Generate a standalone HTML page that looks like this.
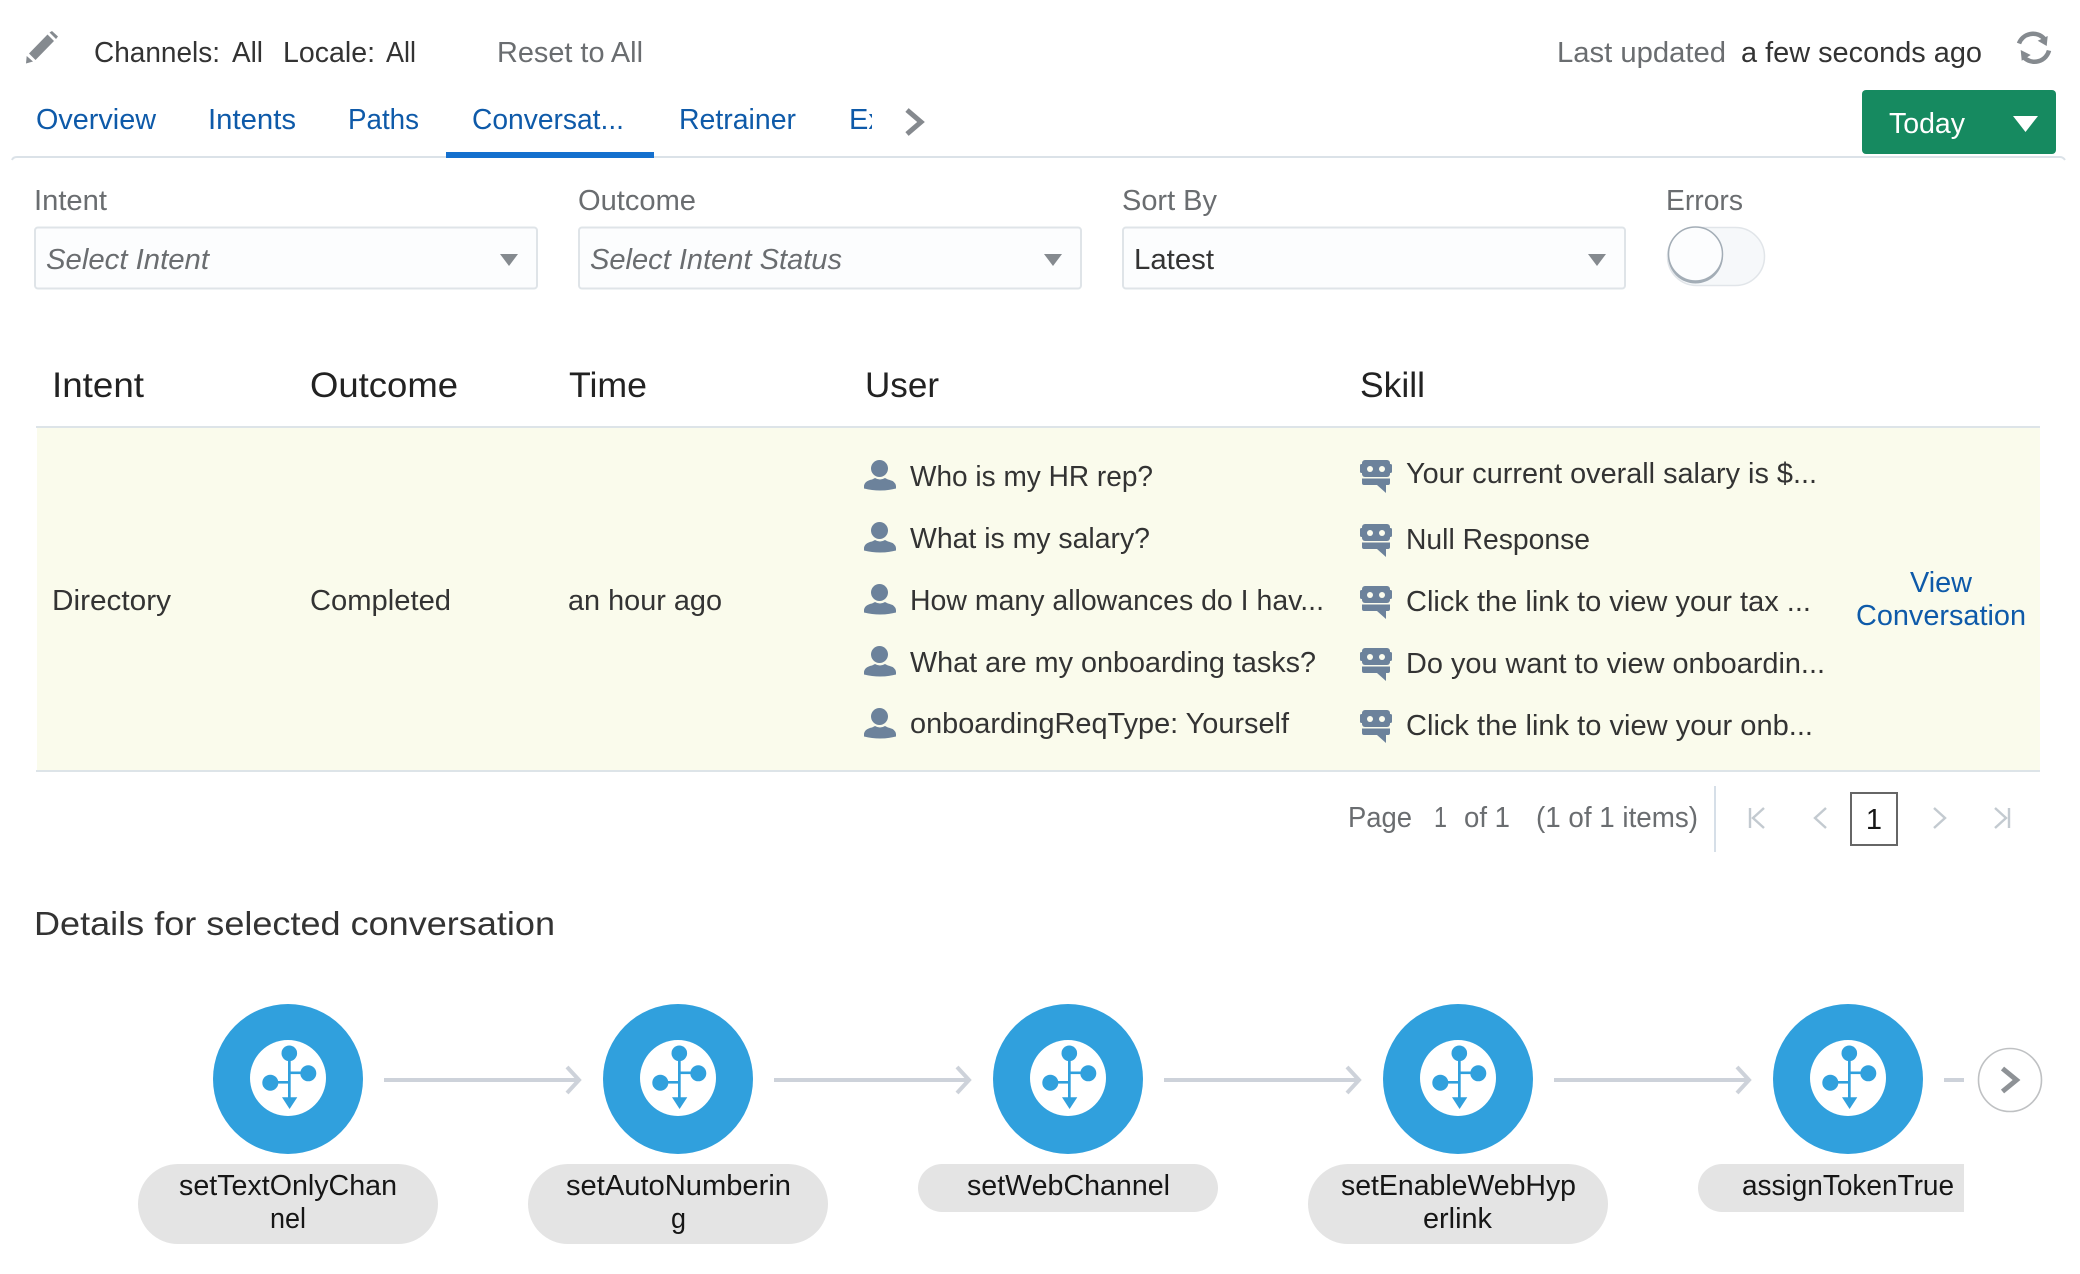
<!DOCTYPE html>
<html lang="en"><head><meta charset="utf-8"><title>Conversations</title>
<style>
html,body{margin:0;padding:0;background:#fff;width:2080px;height:1274px;overflow:hidden}
svg{display:block}
text{font-family:"Liberation Sans",sans-serif;font-size:29px;fill:#333}
.g{fill:#6a6d70}.b{fill:#0e5aa9}.d{fill:#333}.k{fill:#161616}
.h{font-size:35px;fill:#222}
</style></head><body>
<svg width="2080" height="1274" viewBox="0 0 2080 1274" xmlns="http://www.w3.org/2000/svg">
<defs>
<clipPath id="ex"><rect x="840" y="100" width="32" height="50"/></clipPath>
<g id="user" fill="#6c829b"><circle cx="15.5" cy="8.5" r="8.5"/><path d="M0 26Q.5 21 8 19.5L11 18Q16 21 21 18L24 19.5Q31.5 21 32 26V28.5Q16 32.5 0 28.5Z"/></g>
<g id="bot"><g fill="#6c829b"><rect x="2" y="0" width="28" height="17" rx="3"/><rect x="0" y="4" width="32" height="9" rx="1.5"/><path d="M2 18.5H30V23Q30 25 28 25H26V33L17 25H4Q2 25 2 23Z"/></g><circle cx="10" cy="9" r="3" fill="#fbfcee"/><circle cx="22" cy="9" r="3" fill="#fbfcee"/></g>
<g id="node"><circle cx="0" cy="0" r="75" fill="#30a0dd"/><circle cx="0" cy="-1" r="38" fill="#fff"/>
<g fill="#30a0dd"><circle cx="1.3" cy="-25.7" r="7.8"/><circle cx="20.3" cy="-5.7" r="8"/><circle cx="-17.7" cy="3.7" r="8"/><rect x="0" y="-26" width="2.7" height="46"/><rect x="1" y="-7.5" width="19" height="2.6"/><rect x="-17" y="2" width="18" height="2.6"/><path d="M-6 18.3H9.3L1.6 30Z"/></g></g>
<g id="arrow" fill="none" stroke="#cdd2da"><path d="M0 0H194" stroke-width="4"/><path d="M183 -13L195 0L183 13" stroke-width="4"/></g>
</defs>

<!-- top bar -->
<g fill="#858a8f"><path d="M26 63.5L26.7 56L33 61.5Z"/><path d="M29 53.5L35.5 60L54 41L47.5 34.5Z"/><path d="M49.5 32.5L56 39L58 36.5L52 31Z"/></g>
<text x="94" y="62" textLength="126" lengthAdjust="spacingAndGlyphs">Channels:</text>
<text x="232" y="62" textLength="31" lengthAdjust="spacingAndGlyphs">All</text>
<text x="283" y="62" textLength="92" lengthAdjust="spacingAndGlyphs">Locale:</text>
<text x="386" y="62" textLength="30" lengthAdjust="spacingAndGlyphs">All</text>
<text class="g" x="497" y="62" textLength="146" lengthAdjust="spacingAndGlyphs">Reset to All</text>
<text class="g" x="1557" y="62" textLength="169" lengthAdjust="spacingAndGlyphs">Last updated</text>
<text x="1741" y="62" textLength="241" lengthAdjust="spacingAndGlyphs">a few seconds ago</text>
<g fill="none" stroke="#858a8f" stroke-width="4.5"><path d="M2019 43.5A15 15 0 0 1 2044 38.5"/><path d="M2049 50.5A15 15 0 0 1 2024 57.5"/></g>
<g fill="#858a8f"><path d="M2047.7 36L2046.7 46L2037.7 40.7Z"/><path d="M2020.7 50L2021.7 60.7L2030.7 55Z"/></g>

<!-- tabs -->
<path d="M12 160Q13 157 17 157H2060Q2063 157 2065 160" fill="none" stroke="#dbe2e8" stroke-width="2"/>
<rect x="446" y="152" width="208" height="6" fill="#1470ce"/>
<text class="b" x="36" y="129" textLength="120" lengthAdjust="spacingAndGlyphs">Overview</text>
<text class="b" x="208" y="129" textLength="88" lengthAdjust="spacingAndGlyphs">Intents</text>
<text class="b" x="348" y="129" textLength="71" lengthAdjust="spacingAndGlyphs">Paths</text>
<text class="b" x="472" y="129" textLength="152" lengthAdjust="spacingAndGlyphs">Conversat...</text>
<text class="b" x="679" y="129" textLength="117" lengthAdjust="spacingAndGlyphs">Retrainer</text>
<text class="b" x="849" y="129" clip-path="url(#ex)">Explore</text>
<path d="M907 110L921 122L907 134" fill="none" stroke="#85898e" stroke-width="5"/>
<rect x="1862" y="90" width="194" height="64" rx="4" fill="#168a60"/>
<text x="1889" y="133" textLength="76" lengthAdjust="spacingAndGlyphs" style="fill:#fff">Today</text>
<path d="M2013 116H2038L2025.5 132Z" fill="#fff"/>

<!-- filters -->
<text class="g" x="34" y="210" textLength="73" lengthAdjust="spacingAndGlyphs">Intent</text>
<text class="g" x="578" y="210" textLength="118" lengthAdjust="spacingAndGlyphs">Outcome</text>
<text class="g" x="1122" y="210" textLength="95" lengthAdjust="spacingAndGlyphs">Sort By</text>
<text class="g" x="1666" y="210" textLength="77" lengthAdjust="spacingAndGlyphs">Errors</text>
<g fill="#fcfdfe" stroke="#dfe4e8" stroke-width="2"><rect x="35" y="227.5" width="502" height="61" rx="3"/><rect x="579" y="227.5" width="502" height="61" rx="3"/><rect x="1123" y="227.5" width="502" height="61" rx="3"/></g>
<text class="g" x="46" y="269" textLength="163" lengthAdjust="spacingAndGlyphs" font-style="italic">Select Intent</text>
<text class="g" x="590" y="269" textLength="252" lengthAdjust="spacingAndGlyphs" font-style="italic">Select Intent Status</text>
<text x="1134" y="269" textLength="80" lengthAdjust="spacingAndGlyphs">Latest</text>
<g fill="#858a8f"><path d="M500 254H518L509 266Z"/><path d="M1044 254H1062L1053 266Z"/><path d="M1588 254H1606L1597 266Z"/></g>
<rect x="1667.5" y="227.5" width="97" height="58" rx="29" fill="#f6f8fa" stroke="#e1e5e9" stroke-width="1.5"/>
<circle cx="1695.5" cy="256" r="27.5" fill="#a3adb6"/>
<circle cx="1695.5" cy="254" r="27" fill="#fcfdfe" stroke="#a3adb6" stroke-width="1.5"/>

<!-- table -->
<text class="h" x="52" y="397" textLength="92" lengthAdjust="spacingAndGlyphs">Intent</text>
<text class="h" x="310" y="397" textLength="148" lengthAdjust="spacingAndGlyphs">Outcome</text>
<text class="h" x="569" y="397" textLength="78" lengthAdjust="spacingAndGlyphs">Time</text>
<text class="h" x="865" y="397" textLength="74" lengthAdjust="spacingAndGlyphs">User</text>
<text class="h" x="1360" y="397" textLength="65" lengthAdjust="spacingAndGlyphs">Skill</text>
<rect x="37" y="427" width="2003" height="344" fill="#fafbec"/>
<rect x="36" y="426" width="2004" height="2" fill="#dde4e8"/>
<rect x="36" y="770" width="2004" height="2" fill="#dde4e8"/>
<text x="52" y="610" textLength="119" lengthAdjust="spacingAndGlyphs">Directory</text>
<text x="310" y="610" textLength="141" lengthAdjust="spacingAndGlyphs">Completed</text>
<text x="568" y="610" textLength="154" lengthAdjust="spacingAndGlyphs">an hour ago</text>

<use href="#user" x="864" y="460"/><use href="#user" x="864" y="522"/><use href="#user" x="864" y="584"/><use href="#user" x="864" y="646"/><use href="#user" x="864" y="708"/>
<text x="910" y="486" textLength="243" lengthAdjust="spacingAndGlyphs">Who is my HR rep?</text>
<text x="910" y="548" textLength="240" lengthAdjust="spacingAndGlyphs">What is my salary?</text>
<text x="910" y="610" textLength="414" lengthAdjust="spacingAndGlyphs">How many allowances do I hav...</text>
<text x="910" y="672" textLength="406" lengthAdjust="spacingAndGlyphs">What are my onboarding tasks?</text>
<text x="910" y="733" textLength="379" lengthAdjust="spacingAndGlyphs">onboardingReqType: Yourself</text>

<use href="#bot" x="1360" y="460"/><use href="#bot" x="1360" y="524"/><use href="#bot" x="1360" y="586"/><use href="#bot" x="1360" y="648"/><use href="#bot" x="1360" y="710"/>
<text x="1406" y="483" textLength="411" lengthAdjust="spacingAndGlyphs">Your current overall salary is $...</text>
<text x="1406" y="549" textLength="184" lengthAdjust="spacingAndGlyphs">Null Response</text>
<text x="1406" y="611" textLength="405" lengthAdjust="spacingAndGlyphs">Click the link to view your tax ...</text>
<text x="1406" y="673" textLength="419" lengthAdjust="spacingAndGlyphs">Do you want to view onboardin...</text>
<text x="1406" y="735" textLength="407" lengthAdjust="spacingAndGlyphs">Click the link to view your onb...</text>
<text class="b" x="1910" y="592" textLength="62" lengthAdjust="spacingAndGlyphs">View</text>
<text class="b" x="1856" y="625" textLength="170" lengthAdjust="spacingAndGlyphs">Conversation</text>

<!-- pagination -->
<text class="g" x="1348" y="827" textLength="64" lengthAdjust="spacingAndGlyphs">Page</text>
<text class="g" x="1434" y="827" textLength="13" lengthAdjust="spacingAndGlyphs">1</text>
<text class="g" x="1464" y="827" textLength="46" lengthAdjust="spacingAndGlyphs">of 1</text>
<text class="g" x="1536" y="827" textLength="162" lengthAdjust="spacingAndGlyphs">(1 of 1 items)</text>
<rect x="1714" y="786" width="2" height="66" fill="#d6dfe8"/>
<g fill="none" stroke="#c3cad0" stroke-width="2.4">
<path d="M1750 808V828M1764 808L1753 818L1764 828"/>
<path d="M1826 808L1815 818L1826 828"/>
<path d="M1934 808L1945 818L1934 828"/>
<path d="M1995 808L2006 818L1995 828M2009 808V828"/>
</g>
<rect x="1851" y="793" width="46" height="52" fill="#fff" stroke="#666" stroke-width="2"/>
<text class="k" x="1874" y="829" text-anchor="middle">1</text>

<!-- details -->
<text x="34" y="935" textLength="521" lengthAdjust="spacingAndGlyphs" style="font-size:33px">Details for selected conversation</text>
<use href="#node" x="288" y="1079"/><use href="#node" x="678" y="1079"/><use href="#node" x="1068" y="1079"/><use href="#node" x="1458" y="1079"/><use href="#node" x="1848" y="1079"/>
<use href="#arrow" x="384" y="1080"/><use href="#arrow" x="774" y="1080"/><use href="#arrow" x="1164" y="1080"/><use href="#arrow" x="1554" y="1080"/>
<rect x="1944" y="1078" width="20" height="4" fill="#cdd2da"/>
<circle cx="2010" cy="1080" r="31.5" fill="#fff" stroke="#bfc1c3" stroke-width="1.6"/>
<path d="M2002.5 1068.5L2016.5 1080L2002.5 1091.5" fill="none" stroke="#8e9296" stroke-width="5"/>

<g fill="#e4e4e4">
<rect x="138" y="1164" width="300" height="80" rx="40"/>
<rect x="528" y="1164" width="300" height="80" rx="40"/>
<rect x="918" y="1164" width="300" height="48" rx="24"/>
<rect x="1308" y="1164" width="300" height="80" rx="40"/>
<path d="M1964 1164V1212H1722A24 24 0 0 1 1722 1164Z"/>
</g>
<text class="k" x="179" y="1195" textLength="218" lengthAdjust="spacingAndGlyphs">setTextOnlyChan</text>
<text class="k" x="270" y="1228" textLength="36" lengthAdjust="spacingAndGlyphs">nel</text>
<text class="k" x="566" y="1195" textLength="225" lengthAdjust="spacingAndGlyphs">setAutoNumberin</text>
<text class="k" x="671" y="1228" textLength="15" lengthAdjust="spacingAndGlyphs">g</text>
<text class="k" x="967" y="1195" textLength="203" lengthAdjust="spacingAndGlyphs">setWebChannel</text>
<text class="k" x="1341" y="1195" textLength="235" lengthAdjust="spacingAndGlyphs">setEnableWebHyp</text>
<text class="k" x="1423" y="1228" textLength="69" lengthAdjust="spacingAndGlyphs">erlink</text>
<text class="k" x="1742" y="1195" textLength="212" lengthAdjust="spacingAndGlyphs">assignTokenTrue</text>
</svg>
</body></html>
